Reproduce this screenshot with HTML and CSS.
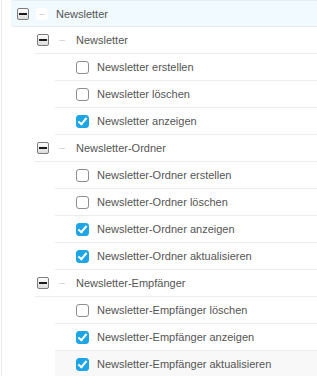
FILE: index.html
```html
<!DOCTYPE html>
<html lang="de">
  <head>
    <meta charset="UTF-8" />
    <meta name="viewport" content="width=device-width, initial-scale=1.0" />
    <title>Rechte</title>
    <link rel="stylesheet" href="styles.css">
  </head>
  <body>
    <div id="tree">
      <div class="row lvl0 selected">
        <span class="toggle"><i></i></span>
        <span class="line">–</span>
        <span class="label">Newsletter</span>
      </div>

      <div class="row lvl1">
        <span class="toggle"><i></i></span>
        <span class="line">–</span>
        <span class="label">Newsletter</span>
      </div>
      <div class="row lvl2">
        <span class="check"></span>
        <span class="label">Newsletter erstellen</span>
      </div>
      <div class="row lvl2">
        <span class="check"></span>
        <span class="label">Newsletter löschen</span>
      </div>
      <div class="row lvl2">
        <span class="check checked"></span>
        <span class="label">Newsletter anzeigen</span>
      </div>

      <div class="row lvl1">
        <span class="toggle"><i></i></span>
        <span class="line">–</span>
        <span class="label">Newsletter-Ordner</span>
      </div>
      <div class="row lvl2">
        <span class="check"></span>
        <span class="label">Newsletter-Ordner erstellen</span>
      </div>
      <div class="row lvl2">
        <span class="check"></span>
        <span class="label">Newsletter-Ordner löschen</span>
      </div>
      <div class="row lvl2">
        <span class="check checked"></span>
        <span class="label">Newsletter-Ordner anzeigen</span>
      </div>
      <div class="row lvl2">
        <span class="check checked"></span>
        <span class="label">Newsletter-Ordner aktualisieren</span>
      </div>

      <div class="row lvl1">
        <span class="toggle"><i></i></span>
        <span class="line">–</span>
        <span class="label">Newsletter-Empfänger</span>
      </div>
      <div class="row lvl2">
        <span class="check"></span>
        <span class="label">Newsletter-Empfänger löschen</span>
      </div>
      <div class="row lvl2">
        <span class="check checked"></span>
        <span class="label">Newsletter-Empfänger anzeigen</span>
      </div>
      <div class="row lvl2 hover">
        <span class="check checked"></span>
        <span class="label">Newsletter-Empfänger aktualisieren</span>
      </div>
    </div>
  </body>
</html>
```

FILE: styles.css
```css
body {
  margin: 0;
  font-family: "Liberation Sans", Arial, sans-serif;
  font-size: 11px;
  color: #555;
  background: #fff;
}

#tree {
  margin-left: 1px;
  border-left: 1px solid #ececec;
  min-height: 376px;
  overflow: hidden;
}

.row {
  display: flex;
  align-items: center;
  height: 26px;
  border-bottom: 1px solid #ececec;
}

.lvl0 {
  margin-left: 9px;
  padding-left: 6px;
}

.lvl1 {
  margin-left: 33px;
  padding-left: 2px;
}

.lvl2 {
  margin-left: 53px;
  padding-left: 21px;
}

.selected {
  height: 25px;
  background-color: #f0faff;
  border-top: 1px solid #e4eef3;
  border-bottom: 1px solid #e2ebee;
  border-radius: 3px 0 0 3px;
}

.hover {
  background-color: #f8f8f8;
}

.toggle {
  width: 10px;
  height: 10px;
  border: 1px solid #7c7c7c;
  border-radius: 2px;
  background: linear-gradient(#fdfdfd, #dcdcdc);
  display: flex;
  align-items: center;
  justify-content: center;
  flex: none;
}

.toggle i {
  width: 8px;
  height: 2px;
  background-color: #1a1a1a;
}

.line {
  width: 12px;
  height: 12px;
  margin-left: 7px;
  margin-right: 8px;
  border-radius: 3px;
  background-color: #fff;
  color: #d0d0d0;
  font-size: 10px;
  line-height: 12px;
  text-align: center;
  flex: none;
}

.check {
  width: 11px;
  height: 11px;
  border: 1px solid #8e8e8e;
  border-radius: 3px;
  background-color: #fff;
  margin-right: 8px;
  box-sizing: content-box;
  flex: none;
  position: relative;
}

.checked {
  border-color: #1ea5e6;
  background-color: #1ea5e6;
}

.checked::after {
  content: "";
  position: absolute;
  left: 3px;
  top: 0px;
  width: 3px;
  height: 7px;
  border-right: 2px solid #fff;
  border-bottom: 2px solid #fff;
  transform: rotate(40deg);
}

.label {
  white-space: nowrap;
}
```
